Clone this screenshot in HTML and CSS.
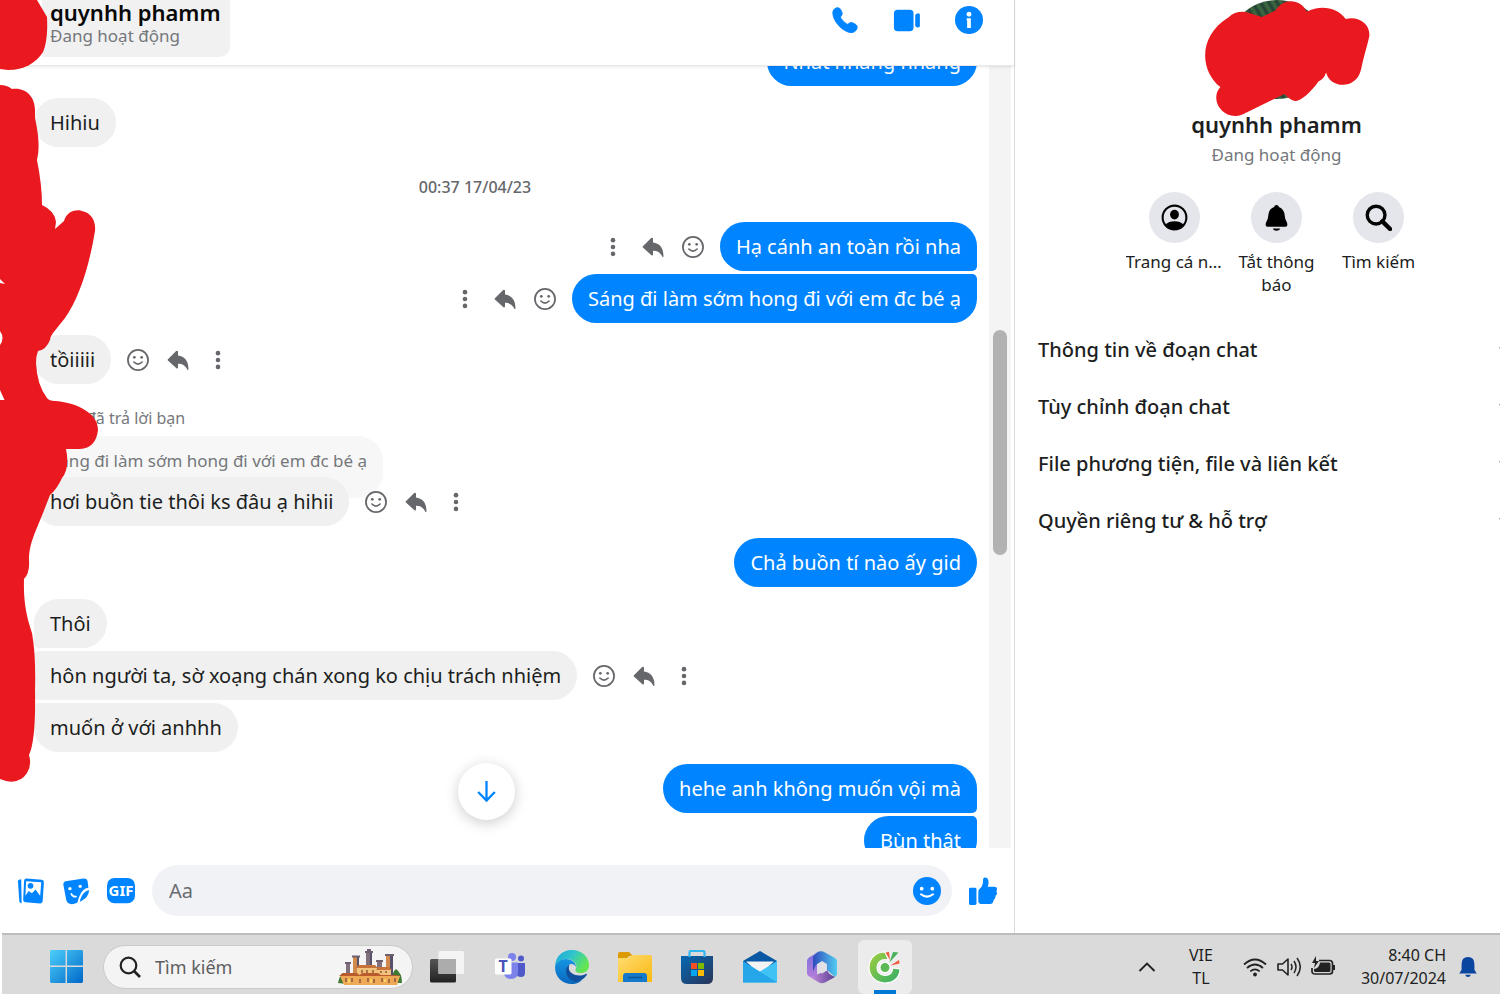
FILE: index.html
```html
<!DOCTYPE html>
<html lang="vi">
<head>
    <meta charset="UTF-8">
    <meta name="viewport" content="width=device-width, initial-scale=1.0">
    <title>quynhh phamm | Messenger</title>
    <link rel="stylesheet" href="styles.css">
</head>
<body>

    <!-- shared icons -->
    <svg class="sprite" aria-hidden="true">
        <symbol id="smile" viewBox="0 0 24 24">
            <circle cx="12" cy="12" r="11" fill="none" stroke="currentColor" stroke-width="1.900"/>
            <circle cx="8" cy="9" r="1.500" fill="currentColor"/>
            <circle cx="16" cy="9" r="1.500" fill="currentColor"/>
            <path d="M7.500 14.200Q12 18.600 16.500 14.200" fill="none" stroke="currentColor" stroke-width="1.800" stroke-linecap="round"/>
        </symbol>
        <symbol id="reply" viewBox="0 0 24 24">
            <path d="M1 11.200 10 2.300Q11.600 1 12 3v4.200C19 8 23.600 13 23.400 22.300q-.3 1.200-1.200.2C19.500 17.500 16.500 16.200 12 16.200v4q-.4 1.800-2 .5L1 12.600q-.7-.7 0-1.400z" fill="currentColor"/>
        </symbol>
        <symbol id="dots" viewBox="0 0 24 24">
            <circle cx="12" cy="4.500" r="2.500" fill="currentColor"/>
            <circle cx="12" cy="12" r="2.500" fill="currentColor"/>
            <circle cx="12" cy="19.500" r="2.500" fill="currentColor"/>
        </symbol>
        <symbol id="chevron" viewBox="0 0 16 16">
            <path d="M1 5l7 7 7-7" fill="none" stroke="currentColor" stroke-width="2"/>
        </symbol>
    </svg>

    <div class="messenger">
        <main class="chat">
            <header class="chat-header">
                <a class="person" href="#">
                    <strong>quynhh phamm</strong>
                    <span>Đang hoạt động</span>
                </a>
                <div class="header-actions">
                    <button type="button" aria-label="Gọi thoại">
                        <svg viewBox="0 0 30 30"><path d="M2 7.500C2 3.500 5 1.500 8 2c1.700.3 2.500 2 3.400 4 .9 2.200.7 3.200-.5 4.600-.9 1-.8 1.700-.1 2.700 1.500 2.300 3.300 4.100 5.600 5.600 1 .7 1.700.8 2.700-.1 1.600-1.300 2.800-1.400 4.900-.4 2.400 1.200 3.900 2 4 4 .1 3-2.600 6.200-6.500 6.100C13 28 2 16.500 2 7.500z" fill="currentColor" stroke="currentColor"/></svg>
                    </button>
                    <button type="button" aria-label="Gọi video">
                        <svg viewBox="0 0 30 30"><rect x="1" y="4" width="21" height="23" rx="4" fill="currentColor"/><path d="M23.800 10Q24 8.500 26 8q2.800-.6 2.800 1.500v12q0 2-2.800 1.500-2-.5-2.200-2z" fill="currentColor"/></svg>
                    </button>
                    <button type="button" aria-label="Thông tin">
                        <svg viewBox="0 0 30 30"><circle cx="15" cy="15" r="15" fill="currentColor"/><circle cx="15" cy="8.800" r="2.600" fill="#fff"/><path d="M12.500 13H17v10.500h-4v-8h-.5z" fill="#fff"/></svg>
                    </button>
                </div>
            </header>

            <div class="thread">
                <div class="messages">
                    <div class="row mine"><p class="bubble">Nhất nhàng nhàng</p></div>

                    <div class="row group"><p class="bubble">Hihiu</p></div>

                    <time class="stamp">00:37 17/04/23</time>

                    <div class="row mine">
                        <p class="bubble first">Hạ cánh an toàn rồi nha</p>
                        <div class="tools">
                            <button type="button" aria-label="Bày tỏ cảm xúc"><svg><use href="#smile"/></svg></button>
                            <button type="button" aria-label="Trả lời"><svg><use href="#reply"/></svg></button>
                            <button type="button" aria-label="Xem thêm"><svg><use href="#dots"/></svg></button>
                        </div>
                    </div>
                    <div class="row mine">
                        <p class="bubble last">Sáng đi làm sớm hong đi với em đc bé ạ</p>
                        <div class="tools">
                            <button type="button" aria-label="Bày tỏ cảm xúc"><svg><use href="#smile"/></svg></button>
                            <button type="button" aria-label="Trả lời"><svg><use href="#reply"/></svg></button>
                            <button type="button" aria-label="Xem thêm"><svg><use href="#dots"/></svg></button>
                        </div>
                    </div>

                    <div class="row group">
                        <p class="bubble">tồiiiii</p>
                        <div class="tools">
                            <button type="button" aria-label="Bày tỏ cảm xúc"><svg><use href="#smile"/></svg></button>
                            <button type="button" aria-label="Trả lời"><svg><use href="#reply"/></svg></button>
                            <button type="button" aria-label="Xem thêm"><svg><use href="#dots"/></svg></button>
                        </div>
                    </div>

                    <div class="reply-label">đã trả lời bạn</div>
                    <div class="row"><p class="quote">Sáng đi làm sớm hong đi với em đc bé ạ</p></div>
                    <div class="row answer">
                        <p class="bubble">hơi buồn tie thôi ks đâu ạ hihii</p>
                        <div class="tools">
                            <button type="button" aria-label="Bày tỏ cảm xúc"><svg><use href="#smile"/></svg></button>
                            <button type="button" aria-label="Trả lời"><svg><use href="#reply"/></svg></button>
                            <button type="button" aria-label="Xem thêm"><svg><use href="#dots"/></svg></button>
                        </div>
                    </div>

                    <div class="row mine group"><p class="bubble">Chả buồn tí nào ấy gid</p></div>

                    <div class="row group"><p class="bubble first">Thôi</p></div>
                    <div class="row">
                        <p class="bubble first last">hôn người ta, sờ xoạng chán xong ko chịu trách nhiệm</p>
                        <div class="tools">
                            <button type="button" aria-label="Bày tỏ cảm xúc"><svg><use href="#smile"/></svg></button>
                            <button type="button" aria-label="Trả lời"><svg><use href="#reply"/></svg></button>
                            <button type="button" aria-label="Xem thêm"><svg><use href="#dots"/></svg></button>
                        </div>
                    </div>
                    <div class="row"><p class="bubble last">muốn ở với anhhh</p></div>

                    <div class="row mine group"><p class="bubble first">hehe anh không muốn vội mà</p></div>
                    <div class="row mine"><p class="bubble last">Bùn thật</p></div>
                </div>
                <div class="scrollbar"><div class="thumb"></div></div>
                <button class="to-bottom" type="button" aria-label="Xuống cuối">
                    <svg viewBox="0 0 24 24"><path d="M12 2v18M4 12.500l8 8.200 8-8.200" fill="none" stroke="currentColor" stroke-width="2.200"/></svg>
                </button>
            </div>

            <form class="composer">
                <button type="button" aria-label="Đính kèm ảnh">
                    <svg viewBox="0 0 30 30"><path d="M1 4.500Q1 2.800 4.500 2.300L5 28Q3 28 2.500 26z" fill="currentColor"/><path d="M10 1.500 26.500 3q2.500.4 2.300 2.800L27.500 26q-.3 2.400-2.700 2.300L9 27q-2.500-.3-2.400-2.700L7.600 4q.2-2.500 2.400-2.500z" fill="currentColor"/><path d="M9.800 4.500 26 5.700 24.800 20l-5-6.500-3.800 4-3.500-2.500L9 20z" fill="#fff"/><circle cx="14.500" cy="9.500" r="3.100" fill="currentColor"/></svg>
                </button>
                <button type="button" aria-label="Chọn nhãn dán">
                    <svg viewBox="0 0 30 30"><path d="M4 4.500 23 1.500q4-.3 4.500 3.500l.8 6.500C21 12.500 18.500 20 16.500 27.500L12 29q-6 .8-7.500-4.500L1.500 8.500Q1 5.500 4 4.500z" fill="currentColor"/><path d="M29 14c-5.500 1.500-8.500 6-10 12.500 6.500-2.500 9.700-7 10-12.500z" fill="currentColor"/><circle cx="8.500" cy="12.500" r="1.800" fill="#fff"/><circle cx="19.500" cy="10" r="1.800" fill="#fff"/><path d="M10 18q1.500 3.500 5 3" fill="none" stroke="#fff" stroke-width="1.800" stroke-linecap="round"/></svg>
                </button>
                <button type="button" aria-label="Chọn file GIF">
                    <svg viewBox="0 0 30 30"><rect x="0" y="1" width="30" height="27" rx="8" fill="currentColor"/><text class="gif" x="15" y="20.500" text-anchor="middle">GIF</text></svg>
                </button>
                <label class="message-box">
                    <input type="text" placeholder="Aa" aria-label="Tin nhắn">
                    <button type="button" aria-label="Chọn biểu tượng cảm xúc">
                        <svg viewBox="0 0 30 30"><circle cx="15" cy="15" r="15" fill="currentColor"/><circle cx="9.300" cy="12.500" r="2" fill="#fff"/><circle cx="20.700" cy="12.500" r="2" fill="#fff"/><path d="M8.500 18.500Q15 23.500 21.500 18.500" fill="none" stroke="#fff" stroke-width="2.200" stroke-linecap="round"/></svg>
                    </button>
                </label>
                <button type="button" aria-label="Gửi lượt thích">
                    <svg viewBox="0 0 30 30"><rect x="0" y="11.500" width="8" height="18.500" rx="1.500" fill="currentColor"/><path d="M10 15.500q0-2 2-3.500 3-2.500 3-8 0-3.500 2-3.500 4 0 4 5.500 0 2-1 4.500h7q3 0 3 2.500 0 1.500-.8 2.200 1 1 .8 2.500-.2 1.700-1.700 2.500.5 3-1.800 4.300-.5 4.500-4 4.500H14q-4 0-4-3z" fill="currentColor"/></svg>
                </button>
            </form>

            <!-- marker strokes over the avatars -->
            <svg class="marker marker-side" viewBox="0 0 100 790" width="100" height="790" aria-hidden="true">
                <path d="M0 0H37L47 17C48 38 45 47 43 52C36 63 24 70 8 70L0 69z"/>
                <path d="M0 85Q7 85 12 89C26 87 35 97 35 110V118Q41 145 37 160Q42 185 42 205Q55 211 56 222L55 229L64 221C67 210 78 209 82 211C92 213 96 222 95 231C89 268 78 300 65 318L53 333Q50 337 50 340Q46 350 38 351Q36 356 36 363Q37 385 47 398Q49 401 55 401C72 402 98 411 98 430Q96 448 80 449H66Q70 468 62 478Q57 489 50 495L43 513C34 535 29 545 29 560Q30 573 24 579C23 610 30 625 32 633Q36 655 35 690Q36 740 29 755Q32 765 27 773Q20 784 6 781L0 779V400H4.500L0 390V345Q5 338 0 331V283L5 284L0 279z"/>
            </svg>
        </main>

        <aside class="details">
            <div class="details-inner">
                <div class="avatar">
                    <svg class="marker marker-avatar" viewBox="314 0 496 352" width="165" height="117" aria-hidden="true">
                        <path d="M385 52C400 36 425 32 445 38L485 51L525 32C550-7 600-5 620 35C660 15 710 20 737 57C780 48 812 75 808 110C800 145 790 175 783 210C770 270 690 268 678 218Q672 238 655 245C630 280 605 300 590 303Q575 307 553 283L425 345C370 365 325 300 360 262C300 215 290 110 385 52z"/>
                    </svg>
                </div>
                <h2>quynhh phamm</h2>
                <p class="status">Đang hoạt động</p>

                <div class="shortcuts">
                    <button type="button">
                        <span class="disc"><svg viewBox="0 0 28 28"><circle cx="14" cy="14" r="12.300" fill="none" stroke="currentColor" stroke-width="2.200"/><ellipse cx="14" cy="11" rx="4.600" ry="5"/><path d="M4.500 21.500Q8 18 14 18t9.500 3.500Q20 26.500 14 26.500T4.500 21.500z"/></svg></span>
                        <span class="caption one-line">Trang cá nhân</span>
                    </button>
                    <button type="button">
                        <span class="disc"><svg viewBox="0 0 28 28"><path d="M14 1q2 0 2.500 2 5.500 2 6 9 .3 4 2 6.500.8 1.500.8 3 0 2-2 2H4.700q-2 0-2-2 0-1.500.8-3 1.700-2.500 2-6.500.5-7 6-9Q12 1 14 1zM10 25.300h8q-1 2.500-4 2.500t-4-2.500z"/></svg></span>
                        <span class="caption">Tắt thông báo</span>
                    </button>
                    <button type="button">
                        <span class="disc"><svg viewBox="0 0 28 28"><circle cx="11.500" cy="11.500" r="9.200" fill="none" stroke="currentColor" stroke-width="3.500"/><path d="M18 18l8 8" stroke="currentColor" stroke-width="4.500" stroke-linecap="round"/></svg></span>
                        <span class="caption">Tìm kiếm</span>
                    </button>
                </div>

                <div class="sections">
                    <button type="button">Thông tin về đoạn chat <svg><use href="#chevron"/></svg></button>
                    <button type="button">Tùy chỉnh đoạn chat <svg><use href="#chevron"/></svg></button>
                    <button type="button">File phương tiện, file và liên kết <svg><use href="#chevron"/></svg></button>
                    <button type="button">Quyền riêng tư &amp; hỗ trợ <svg><use href="#chevron"/></svg></button>
                </div>
            </div>
        </aside>
    </div>

    <footer class="taskbar">
        <button class="start" type="button" aria-label="Start">
            <svg viewBox="0 0 34 34">
                <defs><linearGradient id="win" x1="0" y1="0" x2="1" y2="1"><stop offset="0" stop-color="#4cd0fb"/><stop offset="1" stop-color="#0067c8"/></linearGradient></defs>
                <path d="M1.500 0H16v16H0V1.500Q0 0 1.500 0zM17.500 0h15Q34 0 34 1.500V16H17.500zM0 17.500h16V34H1.500Q0 34 0 32.500zM17.500 17.500H34v15q0 1.500-1.500 1.500h-15z" fill="url(#win)"/>
            </svg>
        </button>
        <label class="search">
            <svg class="lens" viewBox="0 0 22 22"><circle cx="9.500" cy="9.500" r="7.800" fill="none" stroke="#222" stroke-width="2.200"/><path d="M15 15l6 6" stroke="#222" stroke-width="2.600"/></svg>
            <input type="text" placeholder="Tìm kiếm" aria-label="Tìm kiếm">
            <svg class="skyline" viewBox="0 0 64 36" aria-hidden="true">
                <path d="M0 34q2-9 5-10 4 1 4 11zM52 34q2-11 6-14 6 4 6 14z" fill="#3f7a35"/>
                <path d="M8 14h4v20H8zM28 3h6v22h-6zM39 12h5v14h-5z" fill="#80707c"/>
                <path d="M15 8h6v22h-6zM48 6h7v26h-7z" fill="#d08a4b"/>
                <path d="M19 8h2v20h-2zM32 3h2v18h-2zM52 6h3v20h-3z" fill="#56506c"/>
                <path d="M14 6.500h8v2h-8zM27 2h8v2h-8zM47 5h9v2h-9zM29 0h4v2h-4zM38 11h7v2h-7zM7 13h6v2H7z" fill="#6e6070"/>
                <path d="M19 18h20v12H19zM39 20h14v12H39z" fill="#f0c27c"/>
                <path d="M17 19l4-3h16l3 3zM38 21l3-3h10l3 3z" fill="#c8733a"/>
                <path d="M2 27h60l-3 9H6z" fill="#eda955"/>
                <path d="M1 27l4-3h14l2 2 4-2h15l3 2h15l5 1z" fill="#b95b2d"/>
                <path d="M8 29v4M14 29v4M22 30v4M30 29v4M36 30v4M44 29v4M51 30v4M57 29v4M24 21v3M29 21v3M35 21v3M43 22v2M48 22v2" stroke="#8a5238" stroke-width="1.400"/>
                <path d="M11 30v4M33 30v4M47 30v3" stroke="#ffe06a" stroke-width="1.600"/>
            </svg>
        </label>

        <nav class="apps">
            <button type="button" aria-label="Chế độ xem tác vụ">
                <svg viewBox="0 0 34 34">
                    <defs><linearGradient id="dark" x1="0" y1="0" x2="0" y2="1"><stop offset="0" stop-color="#555"/><stop offset="1" stop-color="#222"/></linearGradient></defs>
                    <rect x="0" y="9" width="26" height="23.500" rx="1.500" fill="url(#dark)"/>
                    <rect x="8.500" y="1" width="25.500" height="23" rx="1.500" fill="#f4f4f4"/>
                    <path d="M8.500 9H26v15H8.500z" fill="#acacac"/>
                </svg>
            </button>
            <button type="button" aria-label="Teams">
                <svg viewBox="0 0 34 34">
                    <circle cx="19" cy="7" r="4" fill="#7b83eb"/><circle cx="28" cy="8.500" r="3" fill="#5059c9"/>
                    <path d="M23 13h9v10q0 4-4 4t-5-3z" fill="#5059c9"/>
                    <path d="M11 12.500h14V22q0 7-7 7t-7-7z" fill="#7b83eb"/>
                    <rect x="2" y="8.500" width="16.500" height="16" rx="1.500" fill="#fff"/>
                    <text class="teams" x="10" y="21.500" text-anchor="middle">T</text>
                </svg>
            </button>
            <button type="button" aria-label="Edge">
                <svg viewBox="0 0 34 34">
                    <defs>
                        <linearGradient id="wave" x1="0" y1="0" x2="1" y2=".5"><stop offset="0" stop-color="#1aa5e0"/><stop offset=".5" stop-color="#30c5cb"/><stop offset="1" stop-color="#63e650"/></linearGradient>
                        <linearGradient id="deep" x1="0" y1="0" x2="0" y2="1"><stop offset="0" stop-color="#1595e2"/><stop offset="1" stop-color="#0868bf"/></linearGradient>
                    </defs>
                    <path d="M0 17C0 7 7 0 17 0s17 7 17 15c0 6-4 8-8 8-5 0-6-2-5.500-3.500C24 14 17 8 11 9 5 9.500 1 13 0 17z" fill="url(#wave)"/>
                    <path d="M0 17c1-5 6-8 11-8 6 0 10 4 10 8-2-4-8-4-9 1-1 8 6 14 15 12-4 4-8 4-10 4C7 34 0 27 0 17z" fill="url(#deep)"/>
                    <path d="M14.500 14.500C8 18 11 30 21 32c5-1 9-4 11-7.500 0-.8-.6-.8-1.200-.5-8 4-17-.5-17-6q0-2 .7-3.500z" fill="#0f4f9b"/>
                </svg>
            </button>
            <button type="button" aria-label="File Explorer">
                <svg viewBox="0 0 34 34">
                    <defs><linearGradient id="folder" x1="0" y1="0" x2="1" y2="1"><stop offset="0" stop-color="#ffdc73"/><stop offset="1" stop-color="#f9b911"/></linearGradient></defs>
                    <path d="M0 4q0-2 2-2h9l4 4h-4l-3 3H0z" fill="#dc9a07"/>
                    <path d="M0 8h10l4-3h18q2 0 2 2v25H0z" fill="url(#folder)"/>
                    <path d="M5 32v-6q0-3 3-3h18q3 0 3 3v6z" fill="#1479cb"/>
                    <path d="M10 27.500h14" stroke="#0b5495" stroke-width="1.500"/>
                </svg>
            </button>
            <button type="button" aria-label="Microsoft Store">
                <svg viewBox="0 0 34 34">
                    <defs><linearGradient id="bag" x1="0" y1="0" x2="1" y2="1"><stop offset="0" stop-color="#0669b4"/><stop offset="1" stop-color="#293457"/></linearGradient></defs>
                    <path d="M1 6h32v22q0 6-6 6H7q-6 0-6-6z" fill="url(#bag)"/>
                    <path d="M9.500 7V2.500Q9.500 1 11 1h12q1.500 0 1.500 1.500V7" fill="none" stroke="#31b7ee" stroke-width="2.200"/>
                    <path d="M11 13h6v6h-6z" fill="#f25022"/><path d="M18 13h6v6h-6z" fill="#7fba00"/><path d="M11 20h6v6h-6z" fill="#00a4ef"/><path d="M18 20h6v6h-6z" fill="#ffb900"/>
                </svg>
            </button>
            <button type="button" aria-label="Thư">
                <svg viewBox="0 0 34 34">
                    <path d="M0 11 17 1l17 10v5H0z" fill="#0a57a4"/>
                    <path d="M3 11.500h28L17 24z" fill="#f3f3f3"/>
                    <path d="M34 11v21.500H0L17 21.500z" fill="#40c3f4"/>
                    <path d="M0 11l34 21.500H0z" fill="#24a6e8"/>
                </svg>
            </button>
            <button type="button" aria-label="Microsoft 365">
                <svg viewBox="0 0 34 34">
                    <defs>
                        <linearGradient id="m1" x1="0" y1="0" x2="0" y2="1"><stop offset="0" stop-color="#7a6ddb"/><stop offset="1" stop-color="#b57ddc"/></linearGradient>
                        <linearGradient id="m2" x1="0" y1="0" x2="1" y2="0"><stop offset="0" stop-color="#2f4bbc"/><stop offset="1" stop-color="#52cdf3"/></linearGradient>
                        <linearGradient id="m3" x1="0" y1="0" x2="1" y2="0"><stop offset="0" stop-color="#cb92e6"/><stop offset="1" stop-color="#5b3f90"/></linearGradient>
                    </defs>
                    <path d="M14 1.500 4 7.500Q2 9 2 11v12q0 2.500 2 3.500l8 2V12z" fill="url(#m1)"/>
                    <path d="M12 2.500q4-2.500 8 0l10 5.500q2 1 2 3.500v12q0 2-2 3.500l-8-7v-6L17 11l-6 4-3 6V8q0-2 2-3.500z" fill="url(#m2)"/>
                    <path d="M4 26.500q5 1 8-2l5-2 5-3q1 5 8 7.500l-10 5.500q-3 1.500-6 0z" fill="url(#m3)"/>
                    <path d="M17 11.500l5 3v6l-5 3-5-3v-6z" fill="#e2e0e6"/>
                </svg>
            </button>
            <button class="active" type="button" aria-label="Cốc Cốc">
                <svg viewBox="0 0 34 34">
                    <defs><linearGradient id="coc" x1="0" y1="0" x2="1" y2="1"><stop offset="0" stop-color="#a2cf3e"/><stop offset="1" stop-color="#30ad68"/></linearGradient></defs>
                    <path d="M17 2C7 2 1 9 1 17.500S8 33 17 33s15-6 15-14l-7.500-1c.5 5-3 7.500-7.500 7.500-5 0-8-3.500-8-8s3.500-8 8-8c1.500 0 2.500.3 3.500.8z" fill="url(#coc)" stroke="#fff" stroke-width="1.200"/>
                    <circle cx="17" cy="17.500" r="5.200" fill="#5cb953" stroke="#fff" stroke-width="1.500"/>
                    <path d="M17.500 2.500 21 2l1 8z" fill="#ef5a3c"/><path d="M25 2l5.500.5-9 10z" fill="#48b05b"/><path d="M31 10l.5 3.500-9 2z" fill="#ef5a3c"/>
                </svg>
            </button>
        </nav>

        <div class="tray">
            <button type="button" aria-label="Biểu tượng ẩn"><svg viewBox="0 0 20 20"><path d="M2.500 14 10 6.500 17.500 14" fill="none" stroke="#222" stroke-width="1.900"/></svg></button>
            <button class="lang" type="button">VIE<br>TL</button>
            <button class="status-icons" type="button" aria-label="Mạng, âm lượng, pin">
                <svg viewBox="0 0 24 24"><path d="M1 9.500Q12-.5 23 9.500M4 13q8-7 16 0M7.300 16.300q4.700-4 9.400 0" fill="none" stroke="#222" stroke-width="1.700"/><circle cx="12" cy="19.500" r="1.900" fill="#222"/></svg>
                <svg viewBox="0 0 24 24"><path d="M1 9h4.500L11 4v16l-5.500-5H1z" fill="none" stroke="#222" stroke-width="1.600" stroke-linejoin="round"/><path d="M14 9q2 3 0 6M17 6q4 6 0 12M20 3q6.500 9 0 18" fill="none" stroke="#222" stroke-width="1.500"/></svg>
                <svg viewBox="0 0 24 24"><path d="M8 5.500h10.500q3 0 3 3v7.500q0 3-3 3H4q-3 0-3-3v-3" fill="none" stroke="#222" stroke-width="1.700"/><path d="M9 7.500h9q1.500 0 1.500 1.500v6.500q0 1.500-1.500 1.500H4.500Q3 17 3 15.500V14q5 0 6-6.500zM22 10h2v5h-2zM5 1 1 8h3l-1 5 5-7H5z" fill="#222"/></svg>
            </button>
            <button class="clock" type="button">8:40 CH<br>30/07/2024</button>
            <button type="button" aria-label="Thông báo"><svg viewBox="0 0 20 24"><path d="M10 1q7 0 7 8v6l2.500 4H.5L3 15V9q0-8 7-8zM7 20.500h6q-.5 2.500-3 2.500t-3-2.500z" fill="#0a46a0"/></svg></button>
        </div>
    </footer>

</body>
</html>
```
FILE: styles.css
```css
/* Global styles */
* {
    box-sizing: border-box;
}

html, body {
    height: 100%;
    margin: 0;
}

body {
    display: flex;
    flex-direction: column;
    font-family: 'Noto Sans', 'Open Sans', sans-serif;
    font-size: 20px;
    color: #1c1e21;
    background-color: white;
    overflow: hidden;
}

button, input {
    font: inherit;
    color: inherit;
    border: none;
    padding: 0;
    background: none;
}

button {
    cursor: pointer;
}

h2, p {
    margin: 0;
}

svg {
    display: block;
}

.sprite {
    position: absolute;
    width: 0;
    height: 0;
}

.messenger {
    flex: 1;
    min-height: 0;
    display: flex;
}

/* Chat column */
.chat {
    position: relative;
    flex: 1;
    min-width: 0;
    display: flex;
    flex-direction: column;
    border-right: 1px solid #dcdcdc;
}

.chat-header {
    position: relative;
    z-index: 1;
    display: flex;
    justify-content: space-between;
    align-items: flex-start;
    padding: 0 31px 8px 42px;
    border-bottom: 1px solid #e9e9e9;
    box-shadow: 0 1px 3px rgba(0, 0, 0, 0.1);
}

.person {
    display: flex;
    flex-direction: column;
    padding: 0 9px 9px 8px;
    line-height: 24px;
    color: #080809;
    text-decoration: none;
    background-color: #f1f1f1;
    border-radius: 0 0 10px 0;
}

.person strong {
    font-size: 22px;
    font-weight: 600;
}

.person span {
    font-size: 17px;
    color: #75777b;
}

.header-actions {
    display: flex;
    gap: 34px;
    padding-top: 6px;
    color: #0084ff;
}

.header-actions svg {
    width: 28px;
    height: 28px;
}

.thread {
    position: relative;
    flex: 1;
    min-height: 0;
    display: flex;
    overflow: hidden;
}

.messages {
    flex: 1;
    display: flex;
    flex-direction: column;
    gap: 3px;
    margin-top: -29px;
    padding: 0 12px 0 34px;
}

.row {
    display: flex;
    align-items: center;
    gap: 16px;
}

.row.mine {
    flex-direction: row-reverse;
}

.row.group {
    margin-top: 9px;
}

.bubble {
    position: relative;
    padding: 12px 16px;
    line-height: 25px;
    white-space: nowrap;
    border-radius: 25px;
    background-color: #f0f0f0;
}

.bubble.first {
    border-bottom-left-radius: 5px;
}

.bubble.last {
    border-top-left-radius: 5px;
}

.mine .bubble {
    color: white;
    background-color: #0084ff;
}

.mine .bubble.first {
    border-radius: 25px 25px 5px 25px;
}

.mine .bubble.last {
    border-radius: 25px 5px 25px 25px;
}

.tools {
    display: flex;
    gap: 18px;
    color: #65676b;
}

.mine .tools {
    flex-direction: row-reverse;
}

.tools svg {
    width: 22px;
    height: 22px;
}

.stamp {
    padding: 25px 61px 20px 0;
    font-size: 16px;
    line-height: 24px;
    font-weight: 500;
    text-align: center;
    color: #65676b;
}

.reply-label {
    padding: 20px 0 4px 52px;
    font-size: 16px;
    line-height: 22px;
    color: #75777b;
}

.quote {
    padding: 12px 16px 25px;
    font-size: 17px;
    line-height: 25px;
    color: #75777b;
    background-color: #f7f7f7;
    border-radius: 25px;
}

.row.answer {
    margin-top: -24px;
}

.scrollbar {
    width: 22px;
    margin-right: 3px;
    padding: 264px 4px 0;
    background-color: #f4f4f4;
}

.thumb {
    height: 225px;
    border-radius: 7px;
    background-color: #b2b2b2;
}

.to-bottom {
    position: absolute;
    left: 48%;
    bottom: 28px;
    width: 57px;
    height: 57px;
    margin-left: -29px;
    padding: 16px;
    border-radius: 50%;
    color: #0084ff;
    background-color: white;
    box-shadow: 0 3px 14px rgba(0, 0, 0, 0.2);
}

/* Message input */
.composer {
    display: flex;
    align-items: center;
    gap: 17px;
    padding: 17px;
    color: #0084ff;
}

.composer svg {
    width: 28px;
    height: 28px;
}

.gif {
    font-size: 16px;
    font-weight: 700;
    fill: white;
}

.message-box {
    flex: 1;
    display: flex;
    align-items: center;
    height: 51px;
    padding: 0 11px 0 17px;
    border-radius: 26px;
    background-color: #f0f2f5;
}

.message-box input {
    flex: 1;
    color: #1c1e21;
}

.message-box input::placeholder {
    color: #6a6c70;
}

/* Marker strokes */
.marker {
    position: absolute;
    top: 0;
    z-index: 2;
    fill: #e9191f;
    pointer-events: none;
}

.marker-side {
    left: 0;
}

.marker-avatar {
    left: -22px;
}

/* Details panel */
.details {
    flex: 0 0 485px;
    overflow: hidden;
}

.details-inner {
    margin-right: -38px;
    text-align: center;
}

.avatar {
    position: relative;
    width: 100px;
    height: 99px;
    margin: 0 auto;
    border-radius: 50%;
    background: repeating-linear-gradient(60deg, #1f3b33 0, #3f6b40 4px, #28483a 7px);
}

.details h2 {
    margin-top: 10px;
    font-size: 22px;
    line-height: 30px;
    font-weight: 600;
}

.status {
    margin-top: 4px;
    font-size: 17px;
    line-height: 24px;
    color: #75777b;
}

.shortcuts {
    display: flex;
    justify-content: center;
    margin-top: 25px;
}

.shortcuts button {
    width: 102px;
    display: flex;
    flex-direction: column;
    align-items: center;
    gap: 7px;
}

.disc {
    width: 51px;
    height: 51px;
    padding: 12px;
    border-radius: 50%;
    color: #050505;
    background-color: #e4e6eb;
}

.disc svg {
    width: 27px;
    height: 27px;
}

.caption {
    max-width: 98px;
    font-size: 17px;
    line-height: 23px;
}

.one-line {
    overflow: hidden;
    text-overflow: ellipsis;
    white-space: nowrap;
}

.sections {
    display: flex;
    flex-direction: column;
    margin-top: 25px;
    padding: 0 23px;
}

.sections button {
    display: flex;
    justify-content: space-between;
    align-items: center;
    line-height: 57px;
    font-weight: 500;
}

.sections svg {
    width: 16px;
    height: 16px;
}

/* Taskbar */
.taskbar {
    display: flex;
    align-items: center;
    height: 61px;
    margin: 0 0 6px 2px;
    padding: 4px 22px 0 48px;
    font-size: 16px;
    border-top: 2px solid #bdbdbd;
    background-color: #dadada;
}

.start svg {
    width: 33px;
    height: 33px;
}

.search {
    display: flex;
    align-items: center;
    width: 310px;
    height: 44px;
    margin: 0 7px 0 20px;
    padding: 0 10px 0 15px;
    border: 1px solid #cacaca;
    border-radius: 22px;
    background-color: #f4f4f4;
}

.search input {
    flex: 1;
    min-width: 0;
    margin-left: 14px;
    font-size: 18px;
}

.search input::placeholder {
    color: #5e5e5e;
}

.lens {
    width: 22px;
    height: 22px;
}

.skyline {
    width: 64px;
    height: 36px;
}

.apps {
    display: flex;
    justify-content: space-between;
    width: 492px;
}

.apps button {
    width: 54px;
    height: 54px;
    padding: 10px;
    border-radius: 6px;
}

.apps .active {
    background: linear-gradient(#0078d4, #0078d4) center bottom / 22px 4px no-repeat #ececec;
}

.teams {
    font-size: 16px;
    font-weight: 700;
    fill: #4b53bc;
}

.tray {
    display: flex;
    align-items: center;
    margin-left: auto;
    line-height: 23px;
}

.tray svg {
    width: 20px;
    height: 22px;
}

.lang {
    margin: 0 30px 0 32px;
}

.tray .status-icons {
    display: flex;
    gap: 10px;
    margin-right: 26px;
}

.tray .status-icons svg {
    width: 24px;
    height: 24px;
}

.clock {
    margin-right: 12px;
    text-align: right;
}
```
